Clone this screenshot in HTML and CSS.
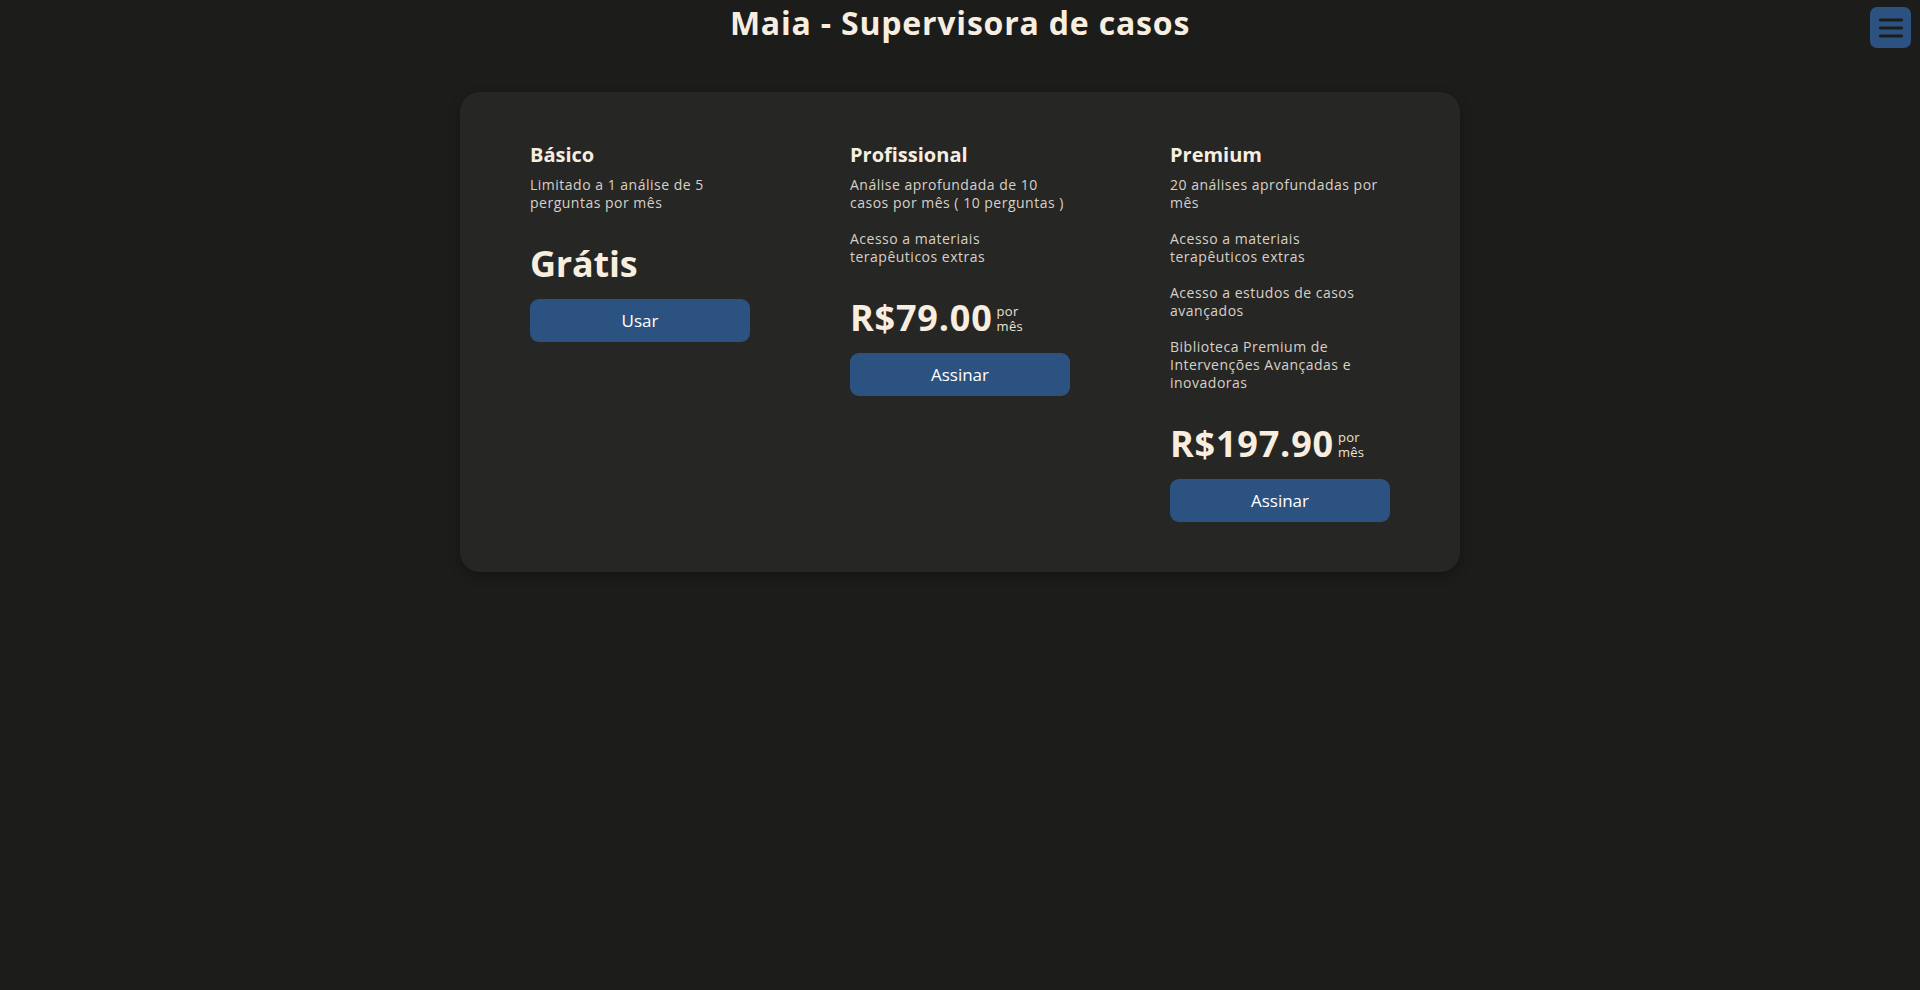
FILE: index.html
```html
<!DOCTYPE html>
<html lang="pt-BR">
<head>
<meta charset="utf-8">
<title>Maia - Supervisora de casos</title>
<link rel="stylesheet" href="styles.css">
</head>
<body>
<header class="topbar">
  <h1 class="title">Maia - Supervisora de casos</h1>
  <button class="menu-btn" aria-label="Menu">
    <svg width="24" height="22" viewBox="0 0 24 22">
      <path d="M1.5 3h21M1.5 11h21M1.5 19h21" stroke="#1c1c1b" stroke-width="3" stroke-linecap="round" fill="none"/>
    </svg>
  </button>
</header>
<main class="plans">
  <section class="plan">
    <h2 class="plan-name">Básico</h2>
    <div class="features">
      <p>Limitado a 1 análise de 5 perguntas por mês</p>
    </div>
    <div class="price"><span class="amount free">Grátis</span></div>
    <button class="cta">Usar</button>
  </section>
  <section class="plan">
    <h2 class="plan-name">Profissional</h2>
    <div class="features">
      <p>Análise aprofundada de 10 casos por mês ( 10 perguntas )</p>
      <p>Acesso a materiais terapêuticos extras</p>
    </div>
    <div class="price"><span class="amount">R$79.00</span><span class="period">por<br>mês</span></div>
    <button class="cta">Assinar</button>
  </section>
  <section class="plan">
    <h2 class="plan-name">Premium</h2>
    <div class="features">
      <p>20 análises aprofundadas por mês</p>
      <p>Acesso a materiais terapêuticos extras</p>
      <p>Acesso a estudos de casos avançados</p>
      <p>Biblioteca Premium de Intervenções Avançadas e inovadoras</p>
    </div>
    <div class="price"><span class="amount">R$197.90</span><span class="period">por<br>mês</span></div>
    <button class="cta">Assinar</button>
  </section>
</main>
</body>
</html>
```

FILE: styles.css
```css
* { box-sizing: border-box; }

html, body {
  margin: 0;
  padding: 0;
  background: #1c1c1b;
  height: 100%;
}

body {
  font-family: "Open Sans", "Liberation Sans", sans-serif;
  color: #f5ecdf;
}

.topbar {
  position: relative;
  padding-top: 3px;
}

.title {
  margin: 0;
  text-align: center;
  font-size: 32px;
  line-height: 40px;
  font-weight: 700;
  color: #f7eee0;
  letter-spacing: 0.8px;
}

.menu-btn {
  position: absolute;
  top: 7px;
  right: 9px;
  width: 41px;
  height: 41px;
  border: 0;
  padding: 0;
  border-radius: 7px;
  background: #2c5282;
  display: flex;
  align-items: center;
  justify-content: center;
}

.plans {
  width: 1000px;
  margin: 49px auto 0;
  padding: 51px 70px 50px;
  background: #262625;
  border-radius: 20px;
  box-shadow: 0 4px 12px rgba(0,0,0,0.25);
  display: grid;
  grid-template-columns: repeat(3, 220px);
  column-gap: 100px;
  align-items: start;
}

.plan {
  display: flex;
  flex-direction: column;
}

.plan-name {
  margin: 0 0 9px;
  font-size: 20px;
  line-height: 24px;
  font-weight: 700;
  color: #f7eee0;
}

.features p {
  margin: 0 0 18px;
  font-size: 14px;
  line-height: 18px;
  color: #d8d1c6;
  letter-spacing: 0.5px;
}

.features p:last-child { margin-bottom: 0; }

.price {
  margin-top: 30px;
  height: 44px;
  line-height: 44px;
  white-space: nowrap;
}

.amount {
  font-size: 36px;
  line-height: 44px;
  font-weight: 700;
  color: #f7eee0;
  letter-spacing: 0.8px;
}

.amount.free { letter-spacing: -0.2px; }

.period {
  display: inline-block;
  vertical-align: baseline;
  margin-left: 4px;
  font-size: 13px;
  line-height: 15px;
  letter-spacing: 0.3px;
  color: #ece3d5;
}

.cta {
  margin-top: 13px;
  width: 220px;
  height: 43px;
  border: 0;
  border-radius: 9px;
  background: #2c5282;
  color: #ffffff;
  font-family: "Open Sans", "Liberation Sans", sans-serif;
  font-size: 17px;
  font-weight: 500;
}
```
